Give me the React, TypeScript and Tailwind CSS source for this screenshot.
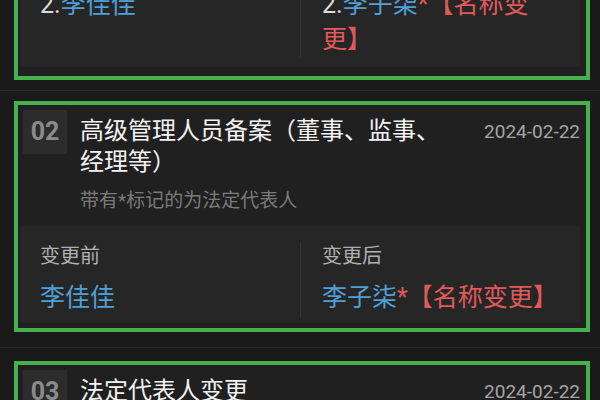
import type { ReactNode } from 'react'

const FONT = "font-['Roboto','Noto_Sans_CJK_SC',sans-serif]"

interface CardProps {
  no: string
  title: string
  date: string
  children: ReactNode
}

function Card({ no, title, date, children }: CardProps) {
  return (
    <div className="ml-[14px] mr-[10px] border-4 border-[#45b04c] bg-[#202020] pt-[5px] pb-[5px] pl-[2px] pr-[6px]">
      {/* header */}
      <div className="flex items-start">
        <div className="ml-[3px] flex h-[44px] w-[44px] shrink-0 items-center justify-center bg-[#2c2c2c] text-[25px] font-bold text-[#8b8b8b]">
          {no}
        </div>
        <div className="ml-[13px] min-w-0 flex-1 pt-[6px]">
          <div className="max-w-[372px] text-[24px] leading-[31px] text-[#f2f2f2]">{title}</div>
          <div className="mt-[10px] text-[19px] leading-[26px] text-[#7a7a7a]">带有*标记的为法定代表人</div>
        </div>
        <div className="shrink-0 pt-[6px] text-[19px] leading-[31px] text-[#a5a5a5]">{date}</div>
      </div>
      {children}
    </div>
  )
}

function Change({ before, after }: { before: ReactNode; after: ReactNode }) {
  return (
    <div className="mt-[12px] grid grid-cols-2 rounded-[2px] bg-[#262626] pt-[17px]">
      <div className="px-[20px] pb-[8px]">
        <div className="text-[20px] leading-[26px] text-[#b0b0b0]">变更前</div>
        <div className="mt-[11px] text-[25px] leading-[35px]">{before}</div>
      </div>
      <div className="mb-[6px] border-l border-[#353535] pl-[21px] pr-[16px]">
        <div className="text-[20px] leading-[26px] text-[#b0b0b0]">变更后</div>
        <div className="mt-[11px] text-[25px] leading-[35px]">{after}</div>
      </div>
    </div>
  )
}

function Gap({ top, bottom }: { top: string; bottom: string }) {
  return (
    <div className={top}>
      <div className={bottom}>
        <div className="h-px bg-[#2a2a2a]" />
      </div>
    </div>
  )
}

export default function App() {
  return (
    <div className={`h-[400px] w-[600px] overflow-hidden bg-[#1a1a1a] ${FONT}`}>
      <div className="-mt-[17px] flex flex-col">
        {/* card 01, scrolled past its top */}
        <div className="ml-[14px] mr-[10px] border-4 border-[#45b04c] bg-[#202020] pb-[9px] pl-[2px] pr-[6px]">
          <div className="grid grid-cols-2 rounded-[2px] bg-[#262626]">
            <div className="px-[20px] pb-[10px] text-[25px] leading-[35px]">
              <span className="text-[#dcdcdc]">2.</span>
              <span className="text-[#4f9fd6]">李佳佳</span>
            </div>
            <div className="mb-[10px] border-l border-[#353535] pl-[21px] pr-[16px] text-[25px] leading-[35px]">
              <span className="text-[#dcdcdc]">2.</span>
              <span className="text-[#4f9fd6]">李子柒</span>
              <span className="text-[#e05a5a]">*【名称变更】</span>
            </div>
          </div>
        </div>

        <Gap top="pt-[10px]" bottom="pb-[10px]" />

        <Card no="02" title="高级管理人员备案（董事、监事、经理等）" date="2024-02-22">
          <Change
            before={<span className="text-[#4f9fd6]">李佳佳</span>}
            after={
              <>
                <span className="text-[#4f9fd6]">李子柒</span>
                <span className="text-[#e05a5a]">*【名称变更】</span>
              </>
            }
          />
        </Card>

        <Gap top="pt-[15px]" bottom="pb-[13px]" />

        <Card no="03" title="法定代表人变更" date="2024-02-22">
          <Change
            before={<span className="text-[#4f9fd6]">李佳佳</span>}
            after={
              <>
                <span className="text-[#4f9fd6]">李子柒</span>
                <span className="text-[#e05a5a]">*</span>
              </>
            }
          />
        </Card>
      </div>
    </div>
  )
}
